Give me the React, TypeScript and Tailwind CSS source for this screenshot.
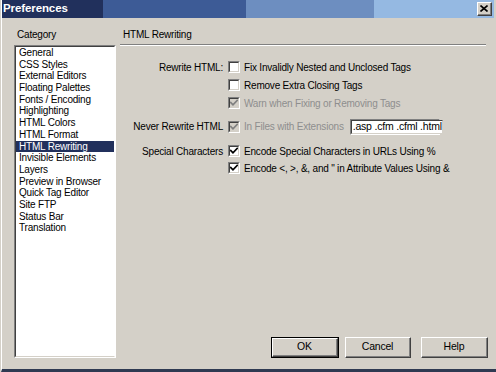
import React from "react";

const categories = [
  "General",
  "CSS Styles",
  "External Editors",
  "Floating Palettes",
  "Fonts / Encoding",
  "Highlighting",
  "HTML Colors",
  "HTML Format",
  "HTML Rewriting",
  "Invisible Elements",
  "Layers",
  "Preview in Browser",
  "Quick Tag Editor",
  "Site FTP",
  "Status Bar",
  "Translation",
];

function Checkbox({ checked = false, disabled = false }: { checked?: boolean; disabled?: boolean }) {
  return (
    <span className="flex h-[12px] w-[12px] shrink-0 border-t border-l border-t-[#808080] border-l-[#808080] border-b border-r border-b-white border-r-white">
      <span
        className={
          "flex flex-1 items-center justify-center border-t border-l border-t-[#404040] border-l-[#404040] border-b border-r border-b-[#d4d0c8] border-r-[#d4d0c8] " +
          (disabled ? "bg-[#d4d0c8]" : "bg-white")
        }
      >
        {checked && (
          <svg width="8" height="8" viewBox="0 0 8 8">
            <polyline
              points="0.8,3.6 3,5.8 7.2,1.4"
              fill="none"
              stroke={disabled ? "#808080" : "#000"}
              strokeWidth="1.8"
              strokeLinecap="square"
            />
          </svg>
        )}
      </span>
    </span>
  );
}

function Row({
  label,
  className,
  children,
}: {
  label?: string;
  className: string;
  children: React.ReactNode;
}) {
  return (
    <div className={"flex items-center " + className}>
      <div className="w-[103px] shrink-0 text-right text-black">{label}</div>
      <div className="ml-[5px] flex items-center">{children}</div>
    </div>
  );
}

function Option({ text, checked, disabled }: { text: string; checked?: boolean; disabled?: boolean }) {
  return (
    <>
      <Checkbox checked={checked} disabled={disabled} />
      <span className={"ml-[4px] whitespace-nowrap " + (disabled ? "text-[#8e8e8e]" : "text-black")}>{text}</span>
    </>
  );
}

function Button({ label, width, isDefault }: { label: string; width: string; isDefault?: boolean }) {
  return (
    <button
      className={
        "flex h-[21px] " +
        width +
        (isDefault ? " border border-black" : "")
      }
    >
      <span className="flex flex-1 border-t border-l border-t-white border-l-white border-b border-r border-b-[#404040] border-r-[#404040]">
        <span className="flex flex-1 items-center justify-center border-b border-r border-b-[#808080] border-r-[#808080] bg-[#d4d0c8] text-[10.5px] text-black">
          {label}
        </span>
      </span>
    </button>
  );
}

export default function App() {
  return (
    <div className="flex h-[372px] w-[496px] flex-col overflow-hidden bg-[#d4d0c8] pl-px font-['Liberation_Sans',Arial,sans-serif] text-[10px] tracking-[-0.2px] select-none">
      <div className="flex flex-1 flex-col border-l border-white border-b-[3px] border-b-[#2f3a52]">
        {/* title bar */}
        <div className="mr-[2px] flex h-[18px] items-center bg-[linear-gradient(to_right,#21305c_0_101px,#3d5b96_101px_244px,#6d8ec0_244px_372px,#95b9e2_372px)] pl-[1px] pr-[2px]">
          <span className="text-[11.5px] font-bold tracking-[-0.1px] text-white">Preferences</span>
          <span className="ml-auto flex h-[14px] w-[15px] border-t border-l border-t-white border-l-white border-b border-r border-b-[#404040] border-r-[#404040]">
            <span className="flex flex-1 items-center justify-center border-b border-r border-b-[#808080] border-r-[#808080] bg-[#d4d0c8]">
              <svg width="8" height="7" viewBox="0 0 8 7">
                <path d="M0.5 0.5 L7.5 6.5 M7.5 0.5 L0.5 6.5" stroke="#000" strokeWidth="1.6" fill="none" />
              </svg>
            </span>
          </span>
        </div>

        <div className="flex flex-1 pt-[10px] pb-[11px] pl-[12px] pr-[8px]">
          {/* category list */}
          <div className="flex w-[102px] flex-col">
            <div className="h-[14px] pl-[3px] leading-[14px] text-black">Category</div>
            <div className="mt-[3px] flex flex-1 border-t border-l border-t-[#808080] border-l-[#808080] border-b border-r border-b-white border-r-white">
              <ul className="flex-1 border-t border-l border-t-[#404040] border-l-[#404040] border-b border-r border-b-[#d4d0c8] border-r-white bg-white">
                {categories.map((c) => (
                  <li
                    key={c}
                    className={
                      "h-[11.7px] pl-[3px] leading-[11.7px] whitespace-nowrap " +
                      (c === "HTML Rewriting" ? "bg-[#21305c] text-white" : "text-black")
                    }
                  >
                    {c}
                  </li>
                ))}
              </ul>
            </div>
          </div>

          {/* settings panel */}
          <div className="ml-[4px] flex flex-1 flex-col">
            <div className="h-[14px] pl-[3px] leading-[14px] text-black">HTML Rewriting</div>
            <div className="mt-[2px] mr-[2px] border-t border-t-[#808080] border-b border-b-white" />

            <Row label="Rewrite HTML:" className="mt-[12px] h-[18px]">
              <Option text="Fix Invalidly Nested and Unclosed Tags" />
            </Row>
            <Row className="h-[18px]">
              <Option text="Remove Extra Closing Tags" />
            </Row>
            <Row className="h-[18px]">
              <Option text="Warn when Fixing or Removing Tags" checked disabled />
            </Row>
            <Row label="Never Rewrite HTML" className="mt-[6px] h-[17px]">
              <Option text="In Files with Extensions" checked disabled />
              <span className="ml-[6px] flex h-[16px] w-[90px] border-t border-l border-t-[#808080] border-l-[#808080] border-b border-r border-b-white border-r-white">
                <span className="flex flex-1 items-center border-t border-l border-t-[#404040] border-l-[#404040] border-b border-r border-b-[#d4d0c8] border-r-[#d4d0c8] bg-white pl-[1px] text-[10.5px] whitespace-nowrap text-black">
                  .asp .cfm .cfml .html
                </span>
              </span>
            </Row>
            <Row label="Special Characters" className="mt-[7px] h-[18px]">
              <Option text="Encode Special Characters in URLs Using %" checked />
            </Row>
            <Row className="h-[16px]">
              <Option text={'Encode <, >, &, and " in Attribute Values Using &'} checked />
            </Row>

            <div className="mt-auto flex justify-end">
              <Button label="OK" width="w-[68px]" isDefault />
              <div className="w-[6px]" />
              <Button label="Cancel" width="w-[66px]" />
              <div className="w-[10px]" />
              <Button label="Help" width="w-[67px]" />
            </div>
          </div>
        </div>
      </div>
    </div>
  );
}
